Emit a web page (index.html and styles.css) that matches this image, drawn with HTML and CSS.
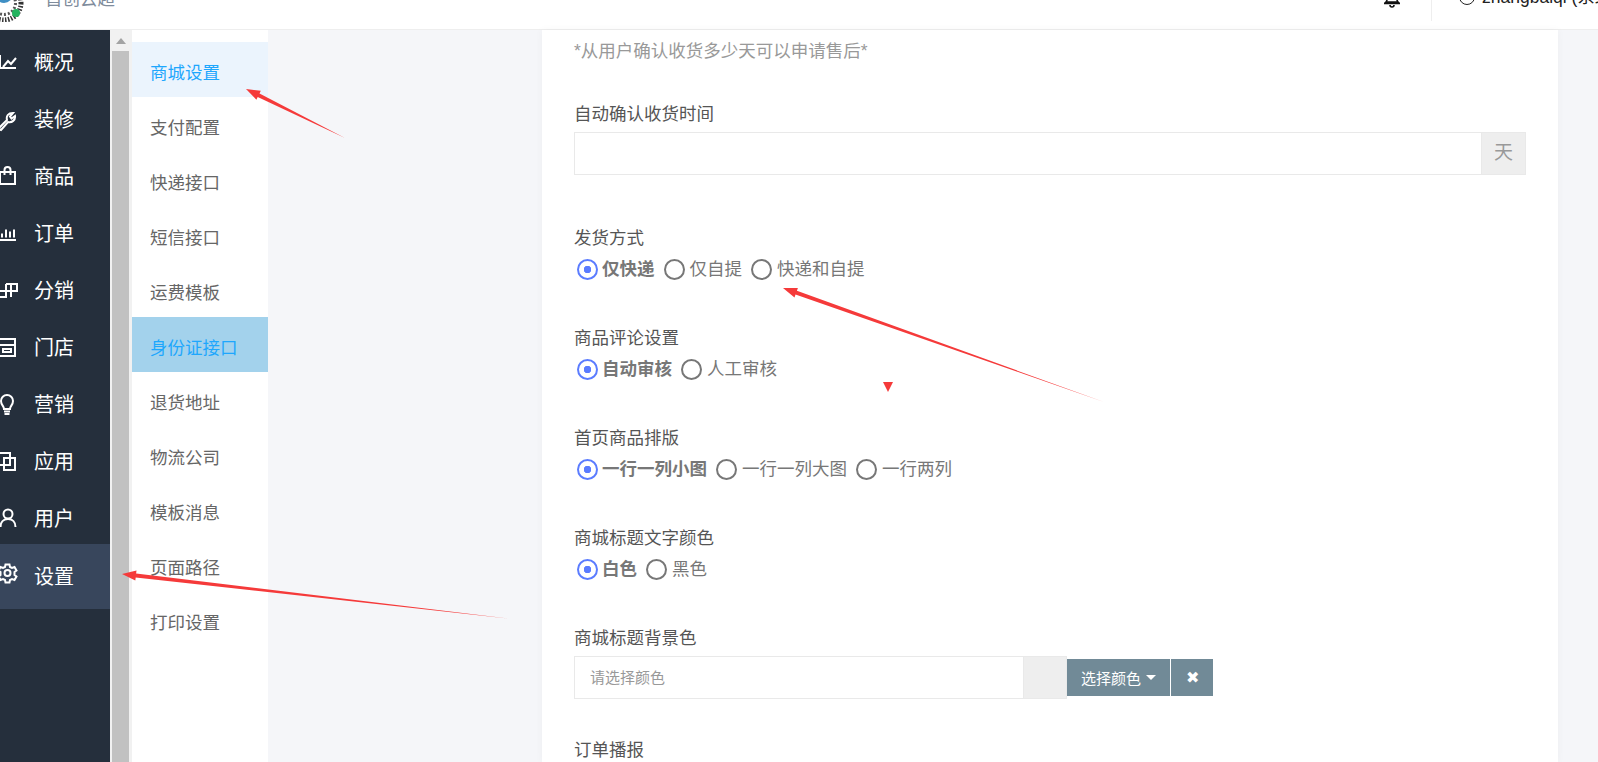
FILE: index.html
```html
<!DOCTYPE html>
<html lang="zh-CN">
  <head>
    <meta charset="UTF-8" />
    <meta name="viewport" content="width=device-width, initial-scale=1.0" />
    <title>商城设置</title>
    <link rel="stylesheet" href="styles.css">
  </head>
  <body>
    <header class="topbar">
      <div class="brand">
        <svg class="brand-logo" width="26" height="22" viewBox="0 0 26 22">
          <circle cx="6" cy="3" r="17" fill="none" stroke="#333" stroke-width="5" stroke-dasharray="1.500 1.500" />
          <circle cx="6" cy="3" r="11.500" fill="none" stroke="#555" stroke-width="3" stroke-dasharray="2 2" />
          <circle cx="6" cy="-6" r="9" fill="#3f8fc4" />
          <circle cx="18" cy="13" r="4" fill="#22b35e" />
        </svg>
        <span class="brand-name">首创云超</span>
      </div>
      <div class="topbar-right">
        <svg class="bell" width="20" height="20" viewBox="0 0 20 20">
          <path d="M4 13c2-2 1-6 2-8s7-2 8 0 0 6 2 8zM2 14.500h16M8 16a2 2 0 0 0 4 0" fill="none" stroke="#111" stroke-width="1.600" />
        </svg>
        <div class="topbar-line"></div>
        <span class="avatar"></span>
        <span class="username">zhangbaiqi (系统管理员)</span>
      </div>
    </header>

    <div class="layout">
      <nav class="sidebar">
        <a class="side-item">
          <svg class="side-icon" viewBox="0 0 22 22"><path d="M6 3v13h16M9 15l5-6 3 3 5-6" /></svg>
          概况
        </a>
        <a class="side-item">
          <svg class="side-icon" viewBox="0 0 22 22"><path d="M4 20l9-9c-1-4 1-7 6-7l-3 3.500 1.500 2L21 7c.5 4-3 7-7 6l-7 8z" /></svg>
          装修
        </a>
        <a class="side-item">
          <svg class="side-icon" viewBox="0 0 22 22"><path d="M6 6h15v12H6zM10.500 9V4a3 3 0 0 1 6 0v5" /></svg>
          商品
        </a>
        <a class="side-item">
          <svg class="side-icon" viewBox="0 0 22 22"><path d="M4 17h18M8 14.500v-4M12 14.500v-8M16 14.500v-6M20 14.500v-8" /></svg>
          订单
        </a>
        <a class="side-item">
          <svg class="side-icon" viewBox="0 0 22 22"><path d="M12 4h11v7H2M17 4v13M12 4v13H2" /></svg>
          分销
        </a>
        <a class="side-item">
          <svg class="side-icon" viewBox="0 0 22 22"><path d="M4 2h17v17H4zM4 8h17M9 12h8v3H9z" /></svg>
          门店
        </a>
        <a class="side-item">
          <svg class="side-icon" viewBox="0 0 22 22"><path d="M10 15c0-3-3-4-3-8a6 6 0 0 1 12 0c0 4-3 5-3 8zM10 17.500h6M10.500 20h5" /></svg>
          营销
        </a>
        <a class="side-item">
          <svg class="side-icon" viewBox="0 0 22 22"><path d="M3 2h13v12H3zM10 7h11v12H10z" /></svg>
          应用
        </a>
        <a class="side-item">
          <svg class="side-icon" viewBox="0 0 22 22"><circle cx="14" cy="6" r="4.500" /><path d="M6.500 19c0-5 3-8 7.500-8s7.500 3 7.500 8" /></svg>
          用户
        </a>
        <a class="side-item side-item-active">
          <svg class="side-icon" viewBox="0 0 22 22"><circle cx="13.500" cy="7" r="3" /><path d="M11.500-1.500h4l.5 2.500 2 1 2.500-1 2 3.500-2 1.500v3l2 1.500-2 3.500-2.500-1-2 1-.5 2.500h-4l-.5-2.500-2-1-2.500 1-2-3.500 2-1.500v-3l-2-1.500 2-3.500 2.500 1 2-1z" /></svg>
          设置
        </a>
      </nav>

      <div class="scrollbar">
        <span class="scroll-arrow"></span>
        <div class="scroll-thumb"></div>
      </div>

      <ul class="submenu">
        <li class="sub-item sub-item-current">商城设置</li>
        <li class="sub-item">支付配置</li>
        <li class="sub-item">快递接口</li>
        <li class="sub-item">短信接口</li>
        <li class="sub-item">运费模板</li>
        <li class="sub-item sub-item-hover">身份证接口</li>
        <li class="sub-item">退货地址</li>
        <li class="sub-item">物流公司</li>
        <li class="sub-item">模板消息</li>
        <li class="sub-item">页面路径</li>
        <li class="sub-item">打印设置</li>
      </ul>

      <main class="content">
        <form class="card">
          <p class="help-text">*从用户确认收货多少天可以申请售后*</p>

          <div class="field field-input">
            <label class="field-label">自动确认收货时间</label>
            <div class="input-group">
              <input class="text-input" type="text" />
              <span class="input-addon">天</span>
            </div>
          </div>

          <div class="field">
            <label class="field-label">发货方式</label>
            <div class="radio-row">
              <span class="radio radio-on"><i></i>仅快递</span>
              <span class="radio"><i></i>仅自提</span>
              <span class="radio"><i></i>快递和自提</span>
            </div>
          </div>

          <div class="field">
            <label class="field-label">商品评论设置</label>
            <div class="radio-row">
              <span class="radio radio-on"><i></i>自动审核</span>
              <span class="radio"><i></i>人工审核</span>
            </div>
          </div>

          <div class="field">
            <label class="field-label">首页商品排版</label>
            <div class="radio-row">
              <span class="radio radio-on"><i></i>一行一列小图</span>
              <span class="radio"><i></i>一行一列大图</span>
              <span class="radio"><i></i>一行两列</span>
            </div>
          </div>

          <div class="field">
            <label class="field-label">商城标题文字颜色</label>
            <div class="radio-row">
              <span class="radio radio-on"><i></i>白色</span>
              <span class="radio"><i></i>黑色</span>
            </div>
          </div>

          <div class="field field-color">
            <label class="field-label">商城标题背景色</label>
            <div class="color-picker">
              <div class="color-input">
                <input class="text-input color-text" type="text" placeholder="请选择颜色" />
                <span class="color-swatch"></span>
              </div>
              <button class="color-btn" type="button">选择颜色<span class="caret"></span></button>
              <button class="color-clear" type="button">✖</button>
            </div>
          </div>

          <div class="field">
            <label class="field-label">订单播报</label>
          </div>
        </form>
      </main>
    </div>

    <!-- annotations drawn on top of the screenshot -->
    <svg class="marks" width="1598" height="762" viewBox="0 0 1598 762">
      <polygon points="246,89 260.800,90.700 259.500,93.400 345,138 257.700,97 256.400,99.700" />
      <polygon points="783,288 797.900,288 796.900,290.800 1104,402 795.500,294.600 794.500,297.400" />
      <polygon points="122,574 136.500,570.600 136.100,573.600 512,619 135.700,577.600 135.300,580.600" />
      <polygon points="883,382 893,382 888,392" />
    </svg>
  </body>
</html>
```

FILE: styles.css
```css
* {
  box-sizing: border-box;
}

html,
body {
  height: 100%;
}

body {
  margin: 0;
  overflow: hidden;
  background-color: #f5f6f9;
  font-family: "Liberation Sans", "Noto Sans CJK SC", sans-serif;
  font-size: 17.5px;
  color: #555;
}

/* top bar, page is scrolled so its content is cut off */
.topbar {
  display: flex;
  justify-content: space-between;
  height: 30px;
  background-color: #fff;
  border-bottom: 1px solid #eee;
  overflow: hidden;
}

.brand {
  display: flex;
  align-items: flex-end;
  height: 22px;
}

.brand-logo {
  flex: none;
  margin-left: -2px;
}

.brand-name {
  margin-left: 21px;
  margin-bottom: 11px;
  font-size: 17.5px;
  line-height: 24px;
  color: #7f8c9c;
}

.topbar-right {
  display: flex;
  align-items: flex-start;
  width: 206px;
  margin-right: -39px;
  flex: none;
  white-space: nowrap;
}

.bell {
  flex: none;
  margin-top: -11px;
  margin-left: -49px;
}

.topbar-line {
  flex: none;
  width: 1px;
  height: 21px;
  margin-left: 29px;
  background-color: #eee;
}

.avatar {
  flex: none;
  width: 16px;
  height: 16px;
  margin-top: -11px;
  margin-left: 27px;
  border: 1.500px solid #222;
  border-radius: 50%;
}

.username {
  margin-left: 7px;
  margin-top: -15px;
  line-height: 24px;
  color: #222;
}

.layout {
  display: flex;
  height: 732px;
}

/* left dark menu */
.sidebar {
  flex: none;
  width: 110px;
  padding-top: 3px;
  background-color: #252f3c;
  color: #fff;
  font-size: 20px;
}

.side-item {
  display: flex;
  align-items: center;
  height: 57px;
}

.side-item-active {
  height: 65px;
  margin-top: -2px;
  padding-bottom: 2px;
  background-color: #38465c;
}

.side-icon {
  flex: none;
  width: 22px;
  height: 22px;
  margin-top: 3px;
  margin-left: -6px;
  margin-right: 18px;
  overflow: visible;
  fill: none;
  stroke: #fff;
  stroke-width: 2;
}

.scrollbar {
  flex: none;
  display: flex;
  flex-direction: column;
  align-items: center;
  width: 22px;
  padding-left: 2px;
  padding-right: 3px;
  background-color: #f1f1f1;
}

.scroll-arrow {
  flex: none;
  width: 0;
  height: 0;
  margin-top: 8px;
  margin-bottom: 7px;
  border-left: 5px solid transparent;
  border-right: 5px solid transparent;
  border-bottom: 6px solid #a3a3a3;
}

.scroll-thumb {
  flex: 1;
  width: 17px;
  background-color: #c1c1c1;
}

/* second level menu */
.submenu {
  flex: none;
  width: 136px;
  margin: 0;
  padding: 12px 0 0;
  list-style: none;
  background-color: #fff;
}

.sub-item {
  height: 55px;
  padding-top: 8px;
  padding-left: 18px;
  line-height: 47px;
  color: #666;
  white-space: nowrap;
}

.sub-item-current {
  background-color: #ebf4fd;
  color: #1ea7fd;
}

.sub-item-hover {
  background-color: #a3d2ec;
  color: #1ea7fd;
}

.content {
  flex: 1;
  min-width: 0;
  padding-left: 274px;
  padding-right: 40px;
}

.card {
  height: 100%;
  padding: 9px 32px 0;
  background-color: #fff;
  box-shadow: 0 0 8px rgba(0, 0, 0, 0.04);
  overflow: hidden;
}

.help-text {
  margin: 0 0 39px;
  line-height: 24px;
  color: #999;
}

.field {
  margin-bottom: 45px;
}

.field-input {
  margin-bottom: 51px;
}

.field-color {
  margin-bottom: 39px;
}

.field-label {
  display: block;
  margin-bottom: 7px;
  line-height: 24px;
  color: #555;
}

.field-input .field-label,
.field-color .field-label {
  margin-bottom: 6px;
}

.input-group {
  display: flex;
  height: 43px;
}

.text-input {
  flex: 1;
  min-width: 0;
  height: 100%;
  padding: 0 15px;
  border: 1.250px solid #e9e9e9;
  border-right: 0;
  background-color: #fff;
  outline: none;
  font: inherit;
}

.input-addon {
  flex: none;
  width: 45px;
  border: 1px solid #e9e9e9;
  background-color: #eee;
  color: #999;
  font-size: 19px;
  line-height: 39px;
  text-align: center;
}

.radio-row {
  display: flex;
  height: 24px;
  padding-left: 3px;
  align-items: center;
}

.radio {
  display: flex;
  align-items: center;
  margin-right: 9px;
  line-height: 24px;
  color: #777;
}

.radio i {
  flex: none;
  width: 21px;
  height: 21px;
  margin-right: 5px;
  border: 2px solid #777;
  border-radius: 50%;
}

.radio-on {
  font-weight: 700;
}

.radio-on i {
  margin-right: 4px;
  border: 2.500px solid #5b7cff;
  background: radial-gradient(circle, #5b7cff 0 3.500px, #fff 4px);
}

.color-picker {
  display: flex;
  align-items: center;
}

.color-input {
  flex: none;
  display: flex;
  width: 493px;
  height: 43px;
}

.color-text {
  font-size: 15px;
}

.color-text::placeholder {
  color: #999;
}

.color-swatch {
  flex: none;
  width: 44px;
  border: 1px solid #e9e9e9;
  background-color: #eee;
}

.color-btn,
.color-clear {
  height: 37px;
  border: 0;
  background-color: #718a97;
  color: #fff;
  font-family: inherit;
  font-size: 15px;
  padding: 0;
}

.color-btn {
  display: flex;
  align-items: center;
  justify-content: center;
  width: 103px;
  margin-right: 1px;
}

.caret {
  width: 0;
  height: 0;
  margin-left: 5px;
  border-left: 5px solid transparent;
  border-right: 5px solid transparent;
  border-top: 5px solid #fff;
}

.color-clear {
  width: 42px;
  font-size: 16px;
}

.marks {
  position: absolute;
  top: 0;
  left: 0;
  pointer-events: none;
}

.marks polygon {
  fill: #f53a3a;
}
```
